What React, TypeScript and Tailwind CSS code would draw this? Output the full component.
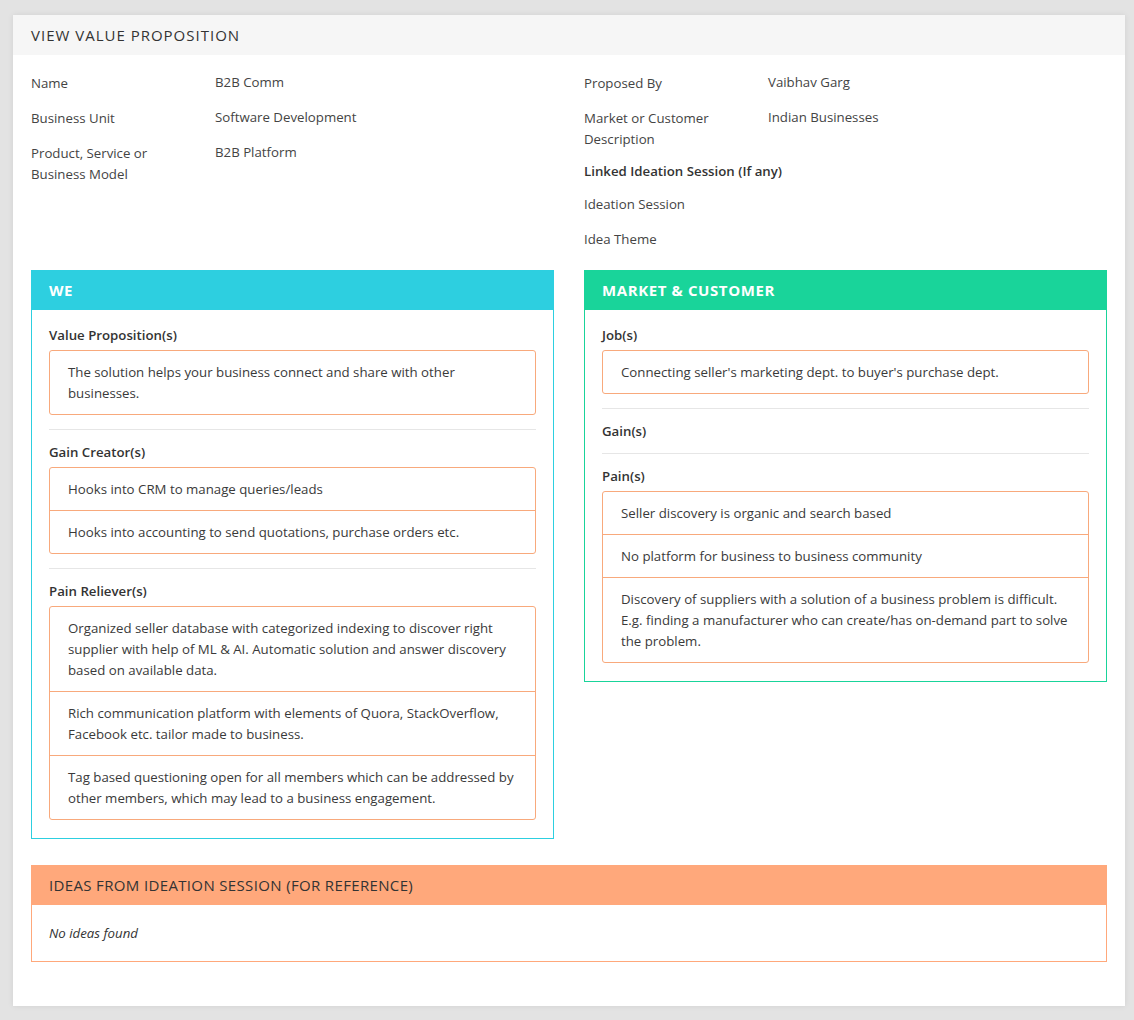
import React from 'react';

interface Section {
    title: string;
    items: string[];
}

interface PanelProps {
    title: string;
    headerBg: string;
    border: string;
    sections: Section[];
}

const font = { fontFamily: '"Open Sans", "Noto Sans", sans-serif' };

const weSections: Section[] = [
    {
        title: 'Value Proposition(s)',
        items: ['The solution helps your business connect and share with other businesses.'],
    },
    {
        title: 'Gain Creator(s)',
        items: [
            'Hooks into CRM to manage queries/leads',
            'Hooks into accounting to send quotations, purchase orders etc.',
        ],
    },
    {
        title: 'Pain Reliever(s)',
        items: [
            'Organized seller database with categorized indexing to discover right supplier with help of ML & AI. Automatic solution and answer discovery based on available data.',
            'Rich communication platform with elements of Quora, StackOverflow, Facebook etc. tailor made to business.',
            'Tag based questioning open for all members which can be addressed by other members, which may lead to a business engagement.',
        ],
    },
];

const marketSections: Section[] = [
    {
        title: 'Job(s)',
        items: ["Connecting seller's marketing dept. to buyer's purchase dept."],
    },
    { title: 'Gain(s)', items: [] },
    {
        title: 'Pain(s)',
        items: [
            'Seller discovery is organic and search based',
            'No platform for business to business community',
            'Discovery of suppliers with a solution of a business problem is difficult. E.g. finding a manufacturer who can create/has on-demand part to solve the problem.',
        ],
    },
];

const Panel: React.FC<PanelProps> = ({ title, headerBg, border, sections }) => {
    return (
        <div className={`border ${border} self-start`}>
            <div className={`${headerBg} h-[40px] -mx-px -mt-px px-[18px] flex items-center text-white font-bold text-[15px] tracking-[0.6px]`}>
                {title}
            </div>
            <div className="px-[17px] pt-[15px] pb-[18px]">
                {sections.map((s, i) => (
                    <div key={s.title}>
                        {i > 0 && <div className="border-t border-[#e6e6e6] mb-[12px]"></div>}
                        <div className={i < sections.length - 1 ? (s.items.length ? 'pb-[14px]' : 'pb-[7px]') : ''}>
                            <p className="font-semibold text-[#333] leading-[21px] mb-[4px]">{s.title}</p>
                            {s.items.length > 0 && (
                                <div className="border border-[#f8a97c] rounded-[3px]">
                                    {s.items.map((item, j) => (
                                        <div
                                            key={j}
                                            className={`pl-[18px] pr-[16px] pt-[11px] pb-[10px] leading-[21px] text-[#3a3a3a] ${j > 0 ? 'border-t border-[#f8a97c]' : ''}`}
                                        >
                                            {item}
                                        </div>
                                    ))}
                                </div>
                            )}
                        </div>
                    </div>
                ))}
            </div>
        </div>
    );
};

const InfoRow: React.FC<{ label: string; value?: string; className?: string }> = ({ label, value, className }) => (
    <div className={`flex leading-[21px] ${className || ''}`}>
        <div className="w-[184px] shrink-0 pr-4 text-[#444]">{label}</div>
        <div className="text-[#444] -mt-px">{value}</div>
    </div>
);

export default function App() {
    return (
        <div className="min-h-[1020px] bg-[#e3e3e3] pl-[13px] pr-[9px] pt-[15px] pb-[15px] text-[13.25px]" style={font}>
            <div className="bg-white shadow-[0_0_6px_rgba(0,0,0,0.08)] pb-[44px]">
                <div className="h-10 bg-[#f6f6f6] px-[18px] flex items-center text-[15px] text-[#333] tracking-[1px] font-medium">
                    VIEW VALUE PROPOSITION
                </div>

                <div className="px-[18px]">
                    <div className="grid grid-cols-2 gap-x-[30px] pt-[18px]">
                        <div className="flex flex-col gap-[14px]">
                            <InfoRow label="Name" value="B2B Comm" />
                            <InfoRow label="Business Unit" value="Software Development" />
                            <InfoRow label="Product, Service or Business Model" value="B2B Platform" />
                        </div>
                        <div className="flex flex-col">
                            <InfoRow label="Proposed By" value="Vaibhav Garg" />
                            <InfoRow className="mt-[14px]" label="Market or Customer Description" value="Indian Businesses" />
                            <p className="mt-[11px] leading-[21px] font-semibold text-[#333]">Linked Ideation Session (If any)</p>
                            <InfoRow className="mt-[12px]" label="Ideation Session" />
                            <InfoRow className="mt-[14px]" label="Idea Theme" />
                        </div>
                    </div>

                    <div className="grid grid-cols-2 gap-x-[30px] mt-[20px]">
                        <Panel title="WE" headerBg="bg-[#2dcfe0]" border="border-[#2dcfe0]" sections={weSections} />
                        <Panel title="MARKET & CUSTOMER" headerBg="bg-[#19d49a]" border="border-[#19d49a]" sections={marketSections} />
                    </div>

                    <div className="mt-[26px] border border-[#ffa87b]">
                        <div className="h-[40px] -mx-px -mt-px bg-[#ffa87b] px-[18px] flex items-center text-[15px] text-[#333] tracking-[0.35px]">
                            IDEAS FROM IDEATION SESSION (FOR REFERENCE)
                        </div>
                        <div className="px-[17px] pt-[18px] pb-[17px] leading-[21px] italic text-[#333]">No ideas found</div>
                    </div>
                </div>
            </div>
        </div>
    );
}
